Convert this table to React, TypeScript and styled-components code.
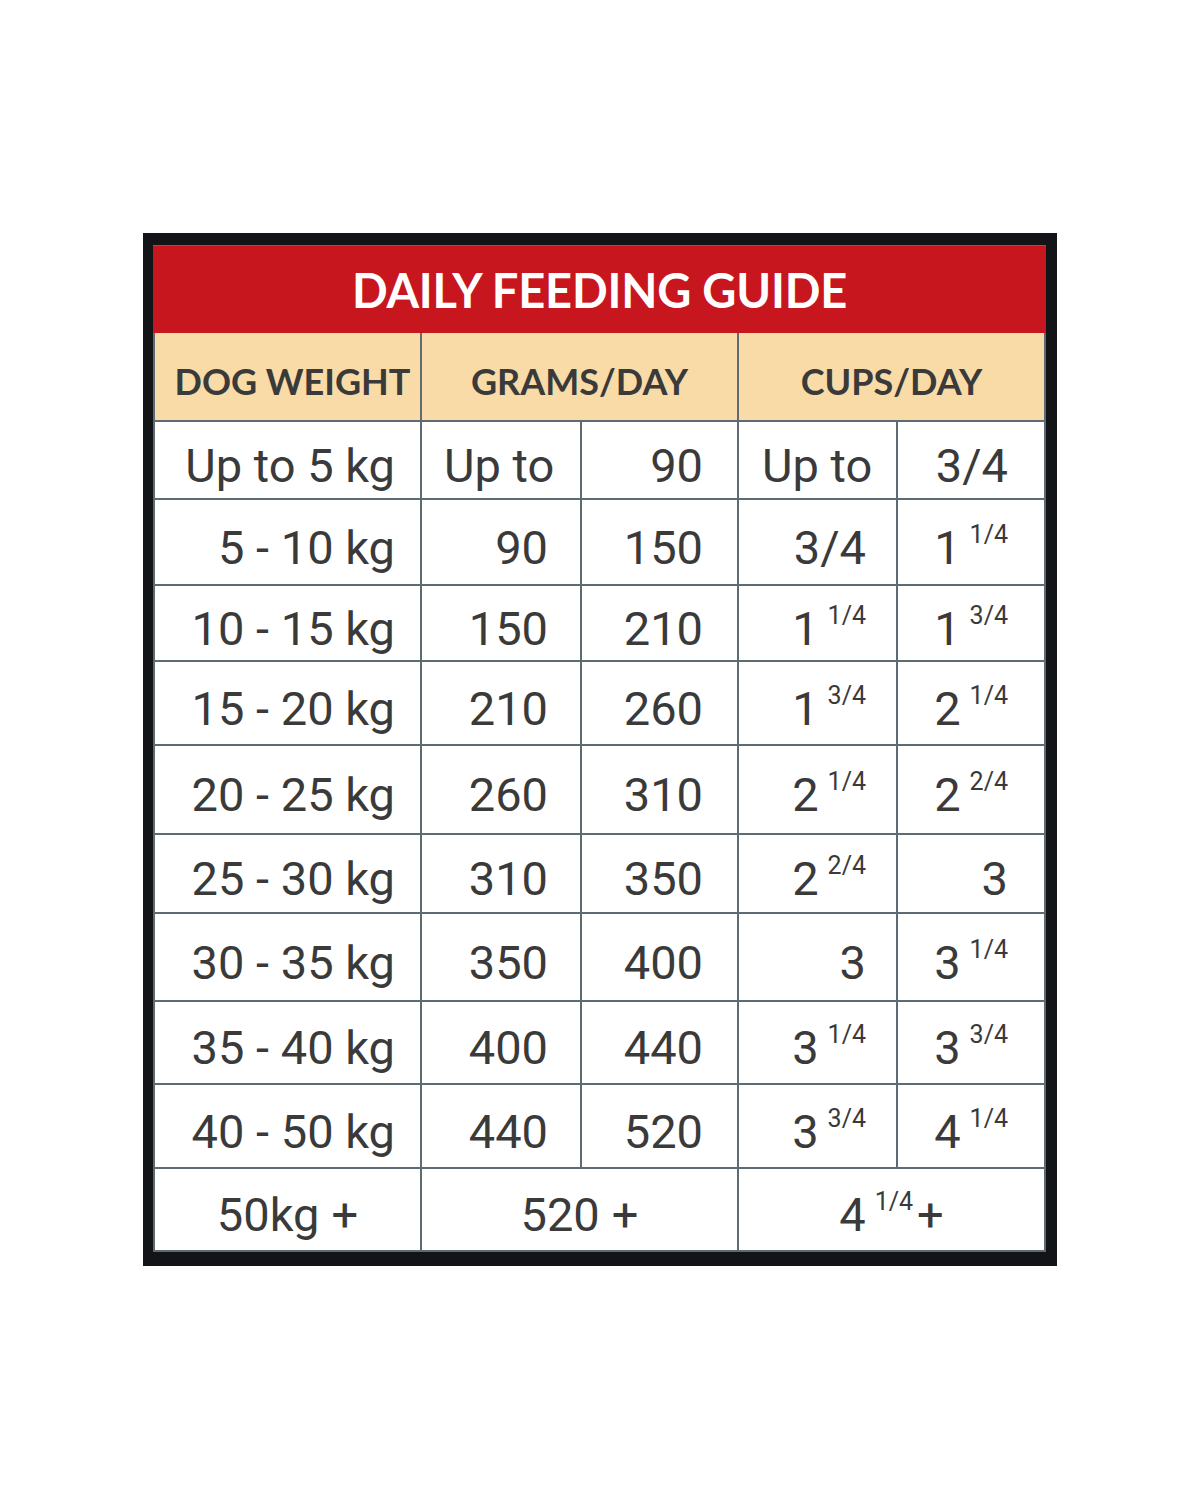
import React from 'react';
import styled, { createGlobalStyle } from 'styled-components';

/* ── page ─────────────────────────────────────────────── */
const Global = createGlobalStyle`
  html, body { margin: 0; padding: 0; background: #ffffff; }
  body { font-family: Roboto, 'Liberation Sans', sans-serif; }
`;

const Page = styled.div`
  width: 1200px;
  height: 1500px;
  padding-top: 233px;
  box-sizing: border-box;
`;

/* ── black frame around the whole guide ───────────────── */
const Frame = styled.div`
  width: 914px;
  margin: 0 auto;
  box-sizing: border-box;
  border-style: solid;
  border-color: #131418;
  border-width: 12px 11px 14px 10px;
  background: #5f6b73;
`;

const Title = styled.h1`
  margin: 0;
  height: 87px;
  border-top: 1px solid #5f6b73;
  background: #c8161e;
  color: #ffffff;
  display: flex;
  align-items: center;
  justify-content: center;
  font-family: Lato, 'Open Sans', sans-serif;
  font-weight: 700;
  font-size: 47px;
  letter-spacing: -0.2px;
`;

/* ── table grid: gaps show the grey rules ─────────────── */
const Table = styled.div<{ $rows: string }>`
  display: grid;
  grid-template-columns: 265px 158px 155px 157px 146px;
  grid-template-rows: ${p => p.$rows};
  gap: 2px;
  padding: 0 2px 2px;
  background: #5f6b73;
`;

const HeadCell = styled.div<{ $span?: number; $shift?: number }>`
  grid-column: span ${p => p.$span ?? 1};
  background: #f9dba8;
  color: #3a3a3a;
  display: flex;
  align-items: center;
  justify-content: center;
  padding: 8px 0 0 ${p => p.$shift ?? 0}px;
  box-sizing: border-box;
  font-family: Lato, 'Open Sans', sans-serif;
  font-weight: 700;
  font-size: 36px;
  white-space: nowrap;
`;

type Align = 'left' | 'right' | 'center';

const Cell = styled.div<{ $align: Align; $pad?: number; $span?: number }>`
  grid-column: span ${p => p.$span ?? 1};
  background: #ffffff;
  color: #3a3a3a;
  display: flex;
  align-items: center;
  justify-content: ${p =>
    p.$align === 'left' ? 'flex-start' : p.$align === 'right' ? 'flex-end' : 'center'};
  padding: 10px ${p => (p.$align === 'right' ? p.$pad ?? 0 : 0)}px 0
    ${p => (p.$align === 'left' ? p.$pad ?? 0 : 0)}px;
  box-sizing: border-box;
  font-size: 47px;
  font-weight: 400;
  white-space: nowrap;
`;

const Frac = styled.span`
  font-size: 25px;
  position: relative;
  top: -13px;
  margin-left: 9px;
`;

const Plus = styled.span<{ $gap?: number }>`
  margin-left: ${p => p.$gap ?? 12}px;
`;

/* ── data ─────────────────────────────────────────────── */
type Amount = string | [string, string];

interface Row {
  weight: string;
  g: [string, string];
  c: [Amount, Amount];
  h: number;
}

const rows: Row[] = [
  { weight: 'Up to 5 kg', g: ['Up to', '90'], c: ['Up to', '3/4'], h: 76 },
  { weight: '5 - 10 kg', g: ['90', '150'], c: ['3/4', ['1', '1/4']], h: 84 },
  { weight: '10 - 15 kg', g: ['150', '210'], c: [['1', '1/4'], ['1', '3/4']], h: 74 },
  { weight: '15 - 20 kg', g: ['210', '260'], c: [['1', '3/4'], ['2', '1/4']], h: 82 },
  { weight: '20 - 25 kg', g: ['260', '310'], c: [['2', '1/4'], ['2', '2/4']], h: 87 },
  { weight: '25 - 30 kg', g: ['310', '350'], c: [['2', '2/4'], '3'], h: 77 },
  { weight: '30 - 35 kg', g: ['350', '400'], c: ['3', ['3', '1/4']], h: 86 },
  { weight: '35 - 40 kg', g: ['400', '440'], c: [['3', '1/4'], ['3', '3/4']], h: 81 },
  { weight: '40 - 50 kg', g: ['440', '520'], c: [['3', '3/4'], ['4', '1/4']], h: 82 },
];

const renderAmount = (a: Amount) =>
  typeof a === 'string' ? a : (
    <>
      {a[0]}
      <Frac>{a[1]}</Frac>
    </>
  );

const templateRows = ['87px', ...rows.map(r => `${r.h}px`), '81px'].join(' ');

/* ── component ────────────────────────────────────────── */
const App: React.FC = () => (
  <Page>
    <Global />
    <Frame>
      <Title>DAILY FEEDING GUIDE</Title>
      <Table $rows={templateRows}>
        <HeadCell $shift={10}>DOG WEIGHT</HeadCell>
        <HeadCell $span={2}>GRAMS/DAY</HeadCell>
        <HeadCell $span={2}>CUPS/DAY</HeadCell>

        {rows.map(r => (
          <React.Fragment key={r.weight}>
            <Cell $align="right" $pad={25}>{r.weight}</Cell>
            {r.g[0] === 'Up to' ? (
              <Cell $align="left" $pad={22}>Up to</Cell>
            ) : (
              <Cell $align="right" $pad={32}>{r.g[0]}</Cell>
            )}
            <Cell $align="right" $pad={34}>{r.g[1]}</Cell>
            {r.c[0] === 'Up to' ? (
              <Cell $align="left" $pad={23}>Up to</Cell>
            ) : (
              <Cell $align="right" $pad={30}>{renderAmount(r.c[0])}</Cell>
            )}
            <Cell $align="right" $pad={36}>{renderAmount(r.c[1])}</Cell>
          </React.Fragment>
        ))}

        <Cell $align="center">
          50kg<Plus>+</Plus>
        </Cell>
        <Cell $align="center" $span={2}>
          520<Plus>+</Plus>
        </Cell>
        <Cell $align="center" $span={2}>
          4<Frac>1/4</Frac>
          <Plus $gap={4}>+</Plus>
        </Cell>
      </Table>
    </Frame>
  </Page>
);

export default App;
